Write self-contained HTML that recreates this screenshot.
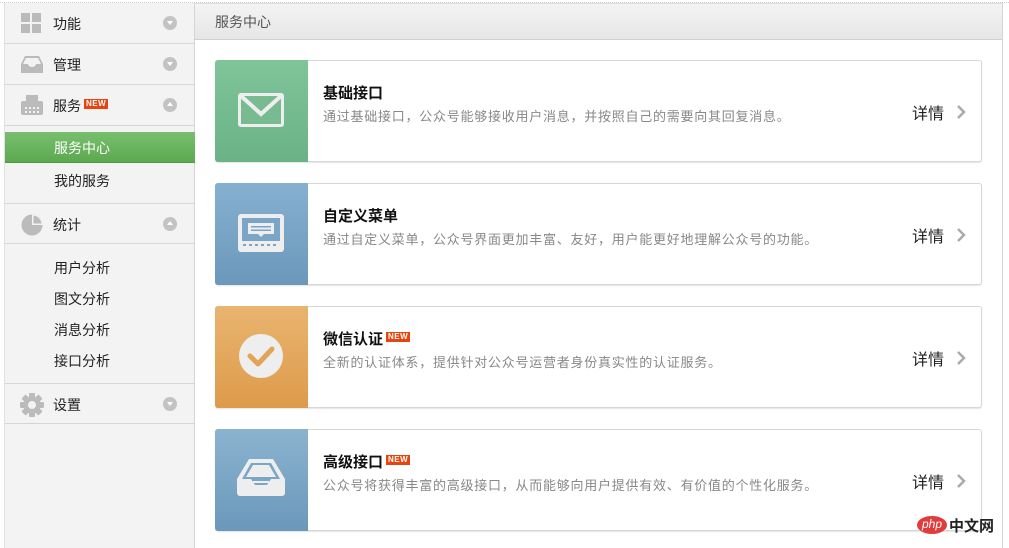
<!DOCTYPE html>
<html><head><meta charset="utf-8">
<style>
*{margin:0;padding:0;box-sizing:border-box}
html,body{width:1009px;height:545px;overflow:hidden;background:#fff;font-family:"Liberation Sans","Noto Sans CJK SC",sans-serif}
.topline{position:absolute;left:0;top:2px;width:1009px;border-top:1px dotted #ccc}
.side{position:absolute;left:4px;top:3px;width:191px;height:545px;background:#f3f3f3;border-right:1px solid #d5d5d5;border-left:1px solid #e0e0e0}
.row{position:absolute;left:0;width:190px;height:41px;border-bottom:1px solid #d6d6d6;font-size:14px;color:#222}
.row .t{position:absolute;left:48px;top:11px}
.row .ic{position:absolute;left:16px;top:10px}
.arr{position:absolute;left:158px;top:13px;width:14px;height:14px;border-radius:50%;background:#c3c3c3}
.arr:after{content:"";position:absolute;left:4px;border-left:3px solid transparent;border-right:3px solid transparent}
.arr.d:after{top:5px;border-top:4px solid #fff}
.arr.u:after{top:4px;border-bottom:4px solid #fff}
.new{display:inline-block;background:#e8450e;color:#fff;font-size:8px;font-weight:bold;line-height:10px;padding:0 2px;vertical-align:5px;margin-left:3px;letter-spacing:.5px}
.sub{position:absolute;left:49px;font-size:14px;color:#222}
.act{position:absolute;left:0;top:129px;width:190px;height:31px;background:linear-gradient(#78bf6e,#5ca94f);border-bottom:1px solid #4d9a42}
.act span{position:absolute;left:49px;top:6px;color:#fff;font-size:14px}
.main{position:absolute;left:195px;top:3px;width:808px;height:545px;border-right:1px solid #d5d5d5}
.hd{height:37px;background:linear-gradient(#f4f4f4,#e6e6e6);border-bottom:1px solid #d0d0d0;border-top:1px solid #ddd;font-size:14px;color:#555;padding:8px 0 0 20px}
.card{position:absolute;left:20px;width:767px;height:102px;border:1px solid #d8d8d8;border-radius:3px;background:#fff;box-shadow:0 1px 1px #e4e4e4}
.card .ib{position:absolute;left:-1px;top:-1px;width:93px;height:102px;border-radius:3px 0 0 3px}
.card .svg{position:absolute;left:0;top:0}
.card h3{position:absolute;left:107px;top:21px;font-size:15px;font-weight:bold;color:#111}
.card p{position:absolute;left:107px;top:45px;font-size:13px;letter-spacing:.75px;color:#888}
.card .more{position:absolute;left:696px;top:39px;font-size:16px;color:#222}
.card .chev{position:absolute;left:740px;top:44px}
</style></head><body>
<div class="topline"></div>
<div class="side">
 <div class="row" style="top:0">
  <svg class="ic" width="20" height="20"><rect x="0" y="0" width="9" height="9" fill="#bbb"/><rect x="11" y="0" width="9" height="9" fill="#bbb"/><rect x="0" y="11" width="9" height="9" fill="#bbb"/><rect x="11" y="11" width="9" height="9" fill="#bbb"/></svg>
  <span class="t">功能</span><div class="arr d"></div></div>
 <div class="row" style="top:41px">
  <svg class="ic" width="22" height="20"><path d="M4 2h14l4 8v9H0v-9z" fill="#bbb"/><path d="M5 4h12l3 6h-5a4 3 0 0 1-8 0H2z" fill="#f3f3f3"/></svg>
  <span class="t">管理</span><div class="arr d"></div></div>
 <div class="row" style="top:82px">
  <svg class="ic" width="22" height="20"><rect x="5" y="0" width="12" height="6" fill="#bbb"/><rect x="0" y="6" width="22" height="14" rx="2" fill="#bbb"/><g fill="#f3f3f3"><rect x="4" y="12" width="2" height="2"/><rect x="8" y="12" width="2" height="2"/><rect x="12" y="12" width="2" height="2"/><rect x="16" y="12" width="2" height="2"/><rect x="4" y="16" width="2" height="2"/><rect x="8" y="16" width="2" height="2"/><rect x="12" y="16" width="2" height="2"/><rect x="16" y="16" width="2" height="2"/></g></svg>
  <span class="t">服务<span class="new">NEW</span></span><div class="arr u"></div></div>
 <div class="act"><span>服务中心</span></div>
 <div class="sub" style="top:168px">我的服务</div>
 <div class="row" style="top:200px;border-top:1px solid #d6d6d6">
  <svg class="ic" width="22" height="22"><circle cx="11" cy="11" r="10.5" fill="#bbb"/><path d="M11 0.5V11H21.5A10.5 10.5 0 0 0 11 0.5z" fill="#f3f3f3"/><path d="M12.5 1.5a9.5 9.5 0 0 1 8 8h-8z" fill="#bbb"/></svg>
  <span class="t">统计</span><div class="arr u"></div></div>
 <div class="sub" style="top:255px">用户分析</div>
 <div class="sub" style="top:286px">图文分析</div>
 <div class="sub" style="top:317px">消息分析</div>
 <div class="sub" style="top:348px">接口分析</div>
 <div class="row" style="top:380px;border-top:1px solid #d6d6d6">
  <svg class="ic" width="24" height="24" viewBox="0 0 24 24" style="left:15px;top:9px"><g fill="#bbb" transform="translate(12 12)"><rect x="-3" y="-12" width="6" height="24" rx="1"/><rect x="-3" y="-12" width="6" height="24" rx="1" transform="rotate(45)"/><rect x="-3" y="-12" width="6" height="24" rx="1" transform="rotate(90)"/><rect x="-3" y="-12" width="6" height="24" rx="1" transform="rotate(135)"/><circle r="8.5"/></g><circle cx="12" cy="12" r="4" fill="#f3f3f3"/></svg>
  <span class="t">设置</span><div class="arr d"></div></div>
</div>
<div class="main">
 <div class="hd">服务中心</div>
 <div class="card" style="top:57px">
  <div class="ib" style="background:linear-gradient(#80c49a,#6ab287)"><svg class="svg" width="93" height="102"><rect x="23" y="33" width="46" height="34" rx="3" fill="#eee"/><rect x="26" y="36" width="40" height="28" fill="#78bb90"/><path d="M26 36L46 54L66 36" fill="none" stroke="#eee" stroke-width="4"/></svg></div>
  <h3>基础接口</h3><p>通过基础接口，公众号能够接收用户消息，并按照自己的需要向其回复消息。</p>
  <span class="more">详情</span><svg class="chev" width="10" height="14"><path d="M2 1l6 6-6 6" fill="none" stroke="#aaa" stroke-width="2.5"/></svg></div>
 <div class="card" style="top:180px">
  <div class="ib" style="background:linear-gradient(#86b0d0,#6b98bb)"><svg class="svg" width="93" height="102"><rect x="23" y="31" width="46" height="38" rx="3" fill="#eee"/><rect x="27" y="35" width="38" height="23" fill="#7aa5c6"/><rect x="33" y="40" width="26" height="11" fill="#eee"/><path d="M43 51l3 3 3-3z" fill="#eee"/><rect x="36" y="43" width="20" height="1.5" fill="#7aa5c6"/><rect x="36" y="46.5" width="20" height="1.5" fill="#7aa5c6"/><g fill="#7aa5c6"><rect x="28" y="61" width="3" height="2"/><rect x="34" y="61" width="3" height="2"/><rect x="40" y="61" width="3" height="2"/><rect x="46" y="61" width="3" height="2"/><rect x="52" y="61" width="3" height="2"/><rect x="58" y="61" width="3" height="2"/></g></svg></div>
  <h3>自定义菜单</h3><p>通过自定义菜单，公众号界面更加丰富、友好，用户能更好地理解公众号的功能。</p>
  <span class="more">详情</span><svg class="chev" width="10" height="14"><path d="M2 1l6 6-6 6" fill="none" stroke="#aaa" stroke-width="2.5"/></svg></div>
 <div class="card" style="top:303px">
  <div class="ib" style="background:linear-gradient(#e9b46f,#dd9b4b)"><svg class="svg" width="93" height="102"><circle cx="46" cy="50" r="22" fill="#eee"/><path d="M35 50l8 8 14-15" fill="none" stroke="#e2a458" stroke-width="5" stroke-linecap="round" stroke-linejoin="round"/></svg></div>
  <h3>微信认证<span class="new">NEW</span></h3><p>全新的认证体系，提供针对公众号运营者身份真实性的认证服务。</p>
  <span class="more">详情</span><svg class="chev" width="10" height="14"><path d="M2 1l6 6-6 6" fill="none" stroke="#aaa" stroke-width="2.5"/></svg></div>
 <div class="card" style="top:426px">
  <div class="ib" style="background:linear-gradient(#8ab3cf,#6b98ba)"><svg class="svg" width="93" height="102"><path d="M34 30h24l12 20v14a3 3 0 0 1-3 3H25a3 3 0 0 1-3-3V50z" fill="#eee"/><path d="M36 34h20l9 16H56l-4 6H40l-4-6H27z" fill="#7ba6c6"/><path d="M38 36h16l7 12H31z" fill="#eee"/><rect x="38" y="52" width="16" height="2" fill="#eee"/></svg></div>
  <h3>高级接口<span class="new">NEW</span></h3><p>公众号将获得丰富的高级接口，从而能够向用户提供有效、有价值的个性化服务。</p>
  <span class="more">详情</span><svg class="chev" width="10" height="14"><path d="M2 1l6 6-6 6" fill="none" stroke="#aaa" stroke-width="2.5"/></svg></div>
</div>
<div style="position:absolute;left:917px;top:516px;width:30px;height:18px;border-radius:50%;background:#e03c3c;color:#fff;font-size:12px;text-align:center;line-height:17px;font-style:italic">php</div>
<div style="position:absolute;left:949px;top:515px;font-size:15px;color:#222;font-weight:bold">中文网</div>
</body></html>
